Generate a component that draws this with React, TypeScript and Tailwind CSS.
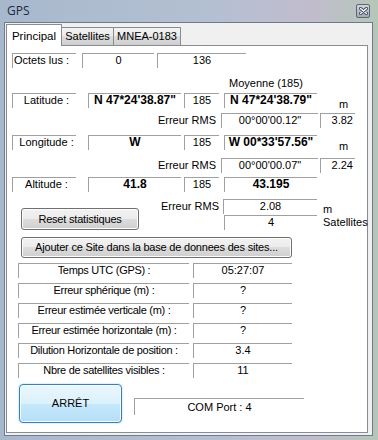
import type { ReactNode } from 'react';

function Field({ className = '', children }: { className?: string; children?: ReactNode }) {
  return (
    <div
      className={`h-[15px] shrink-0 border-t border-l border-[#a0a0a0] leading-[13px] whitespace-nowrap ${className}`}
    >
      {children}
    </div>
  );
}

function WinButton({ className = '', children }: { className?: string; children: ReactNode }) {
  return (
    <div
      className={`shrink-0 flex items-center justify-center rounded-[3px] border border-[#707070] bg-[linear-gradient(#f2f2f2,#ebebeb_50%,#dddddd_50%,#cfcfcf)] shadow-[inset_0_0_0_1px_#fcfcfc] whitespace-nowrap tracking-[-0.2px] ${className}`}
    >
      {children}
    </div>
  );
}

function CoordRow({ label, value, count, mean, unit }: { label: string; value: string; count: string; mean: string; unit?: boolean }) {
  return (
    <>
      <Field className="ml-[5px] w-[64px] pl-[4px] text-center">{label}</Field>
      <Field className="ml-[12px] w-[93px] text-center font-bold text-[12px]">{value}</Field>
      <Field className="ml-[3px] w-[35px] text-center">{count}</Field>
      <Field className="ml-[5px] w-[93px] text-center font-bold text-[12px]">{mean}</Field>
      {unit && <span className="ml-[22px] mt-[5px] leading-[13px]">m</span>}
    </>
  );
}

function RmsRow({ value, meters }: { value: string; meters: string }) {
  return (
    <>
      <span className="ml-[150px] w-[59px] text-right leading-[15px] whitespace-nowrap">Erreur RMS</span>
      <Field className="ml-[5px] w-[97px] text-center">{value}</Field>
      <Field className="ml-[2px] w-[35px] pr-[2px] text-right">{meters}</Field>
    </>
  );
}

const STATS = [
  ['Temps UTC (GPS) :', '05:27:07'],
  ['Erreur sphérique (m) :', '?'],
  ['Erreur estimée verticale (m) :', '?'],
  ['Erreur estimée horizontale (m) :', '?'],
  ['Dilution Horizontale de position :', '3.4'],
  ['Nbre de satellites visibles :', '11'],
];

export default function App() {
  return (
    <div className="w-[378px] h-[440px] overflow-hidden flex flex-col bg-[linear-gradient(90deg,#a8b8cc,#b3c0d2_55%,#c1bccd_82%,#b5c7b8)] font-['Liberation_Sans',Arial,sans-serif] text-[11px] text-black">
      {/* title bar */}
      <div className="h-[22px] shrink-0 flex items-start">
        <span className="ml-[7px] mt-[2px] font-['Open_Sans',sans-serif] text-[12px] leading-[17px] text-[#1b2a40]">
          GPS
        </span>
        <div className="ml-auto mr-[8px] mt-[4px] w-[14px] h-[14px] rounded-[2px] border border-[#5d6676] bg-[linear-gradient(#cfd5de,#9ea9b8)] flex items-center justify-center">
          <svg width="9" height="8" viewBox="0 0 9 8">
            <path d="M1.5 1.5 L7.5 6.5 M7.5 1.5 L1.5 6.5" stroke="#3b4350" strokeWidth="3" strokeLinecap="round" />
            <path d="M1.5 1.5 L7.5 6.5 M7.5 1.5 L1.5 6.5" stroke="#ffffff" strokeWidth="1.4" strokeLinecap="round" />
          </svg>
        </div>
      </div>

      {/* client area */}
      <div className="ml-[4px] w-[369px] h-[414px] border border-[#6e7b8c] bg-[#f0f0f0] flex flex-col">
        {/* tabs */}
        <div className="h-[22px] shrink-0 flex items-end pl-[1px]">
          <div className="relative z-10 -mb-px w-[56px] h-[22px] border border-b-0 border-[#898c95] bg-white text-center leading-[20px] pt-[1px] text-[11.5px]">
            Principal
          </div>
          <div className="w-[52px] h-[18px] border border-b-0 border-l-0 border-[#898c95] bg-[linear-gradient(#f2f2f2,#ebebeb_50%,#dddddd_50%,#cfcfcf)] text-center leading-[17px]">
            Satellites
          </div>
          <div className="w-[67px] h-[18px] border border-b-0 border-l-0 border-[#898c95] bg-[linear-gradient(#f2f2f2,#ebebeb_50%,#dddddd_50%,#cfcfcf)] text-center leading-[17px]">
            MNEA-0183
          </div>
        </div>

        {/* panel */}
        <div className="ml-[1px] w-[362px] h-[388px] border border-[#898c95] bg-white flex flex-col">
          <div className="flex h-[15px] mt-[7px]">
            <Field className="ml-[5px] w-[64px] pl-[1px]">Octets lus :</Field>
            <Field className="ml-[6px] w-[72px] text-center">0</Field>
            <Field className="ml-[3px] w-[89px] text-center">136</Field>
          </div>

          <div className="flex h-[13px] mt-[9px]">
            <span className="ml-[222px] leading-[13px]">Moyenne (185)</span>
          </div>

          <div className="flex items-start h-[15px] mt-[3px]">
            <CoordRow label="Latitude :" value={'N 47*24\'38.87"'} count="185" mean={'N 47*24\'38.79"'} unit />
          </div>
          <div className="flex h-[15px] mt-[5px]">
            <RmsRow value={'00°00\'00.12"'} meters="3.82" />
          </div>

          <div className="flex items-start h-[15px] mt-[7px]">
            <CoordRow label="Longitude :" value="W" count="185" mean={'W 00*33\'57.56"'} unit />
          </div>
          <div className="flex h-[15px] mt-[8px]">
            <RmsRow value={'00°00\'00.07"'} meters="2.24" />
          </div>

          <div className="flex items-start h-[15px] mt-[4px]">
            <CoordRow label="Altitude :" value="41.8" count="185" mean="43.195" />
          </div>

          {/* reset + altitude error */}
          <div className="flex h-[31px] mt-[7px]">
            <WinButton className="ml-[14px] mt-[9px] w-[118px] h-[22px]">Reset statistiques</WinButton>
            <div className="ml-[18px] flex flex-col gap-[1px]">
              <div className="flex items-start h-[15px]">
                <span className="w-[62px] text-right leading-[15px] whitespace-nowrap">Erreur RMS</span>
                <Field className="ml-[4px] w-[94px] text-center">2.08</Field>
                <span className="ml-[6px] mt-[4px] leading-[13px]">m</span>
              </div>
              <div className="flex h-[15px]">
                <Field className="ml-[67px] w-[93px] text-center">4</Field>
                <span className="ml-[6px] leading-[15px]">Satellites</span>
              </div>
            </div>
          </div>

          <WinButton className="ml-[14px] mt-[7px] w-[271px] h-[21px]">
            Ajouter ce Site dans la base de donnees des sites...
          </WinButton>

          <div className="mt-[5px] flex flex-col gap-[5px]">
            {STATS.map(([label, value]) => (
              <div key={label} className="flex h-[15px]">
                <Field className="ml-[11px] w-[171px] text-center tracking-[-0.3px]">{label}</Field>
                <Field className="ml-[4px] w-[99px] text-center">{value}</Field>
              </div>
            ))}
          </div>

          <div className="flex items-start mt-[6px]">
            <div className="ml-[12px] w-[103px] h-[39px] shrink-0 flex items-center justify-center rounded-[4px] border border-[#3c7fb1] bg-[linear-gradient(#eaf6fd,#dcf1fc_50%,#c6e8fb_50%,#b4def6)] shadow-[inset_0_0_0_1px_#f4fbff,0_0_2px_#8fcdf0]">
              ARRÊT
            </div>
            <Field className="ml-[12px] mt-[14px] w-[170px] h-[17px] pt-[2px] text-center">COM Port : 4</Field>
          </div>
        </div>
      </div>
    </div>
  );
}
